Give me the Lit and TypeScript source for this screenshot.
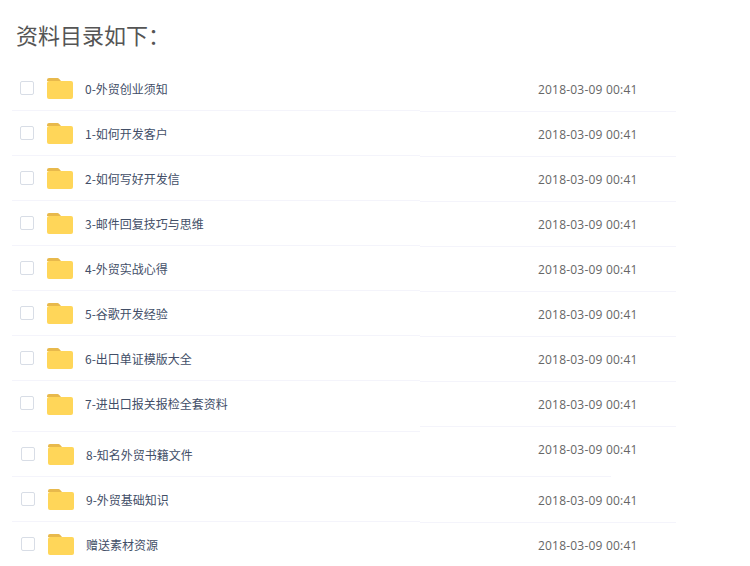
import { LitElement, html, css, svg } from "lit";
import { customElement } from "lit/decorators.js";

const names = ["0-外贸创业须知","1-如何开发客户","2-如何写好开发信","3-邮件回复技巧与思维","4-外贸实战心得","5-谷歌开发经验","6-出口单证模版大全","7-进出口报关报检全套资料","8-知名外贸书籍文件","9-外贸基础知识","赠送素材资源"];

const folder = svg`<svg class="folder" width="26" height="21" viewBox="0 0 26 21"><path d="M0 2a2 2 0 0 1 2-2h8.500a2 2 0 0 1 1.500.700L14 3H0z" fill="#e8b94c"/><path d="M0 5a2 2 0 0 1 2-2h22a2 2 0 0 1 2 2v14a2 2 0 0 1-2 2H2a2 2 0 0 1-2-2z" fill="#ffd659"/></svg>`;

@customElement("app-root")
export class AppRoot extends LitElement {
  static styles = css`
    :host { display: block; width: 750px; height: 566px; overflow: hidden; background: #fff; font-family: "Noto Sans CJK SC", sans-serif; }
    h1 { margin: 0; padding: 18px 0 0 16px; height: 66px; box-sizing: border-box; font-size: 22px; line-height: 32px; font-weight: 400; color: #555; }
    .table { display: grid; grid-template-columns: 408px 256px; margin-left: 12px; }
    .row { display: flex; align-items: center; height: 45px; box-sizing: border-box; border-bottom: 1px solid #f4f4fb; white-space: nowrap; }
    .name { padding-left: 8px; gap: 13px; padding-top: 1px; }
    .name.r7 { height: 51px; padding-bottom: 5px; }
    .name.shift { padding-left: 9px; }
    .box { width: 14px; height: 14px; box-sizing: border-box; border: 1px solid #d8dde6; border-radius: 2px; margin-bottom: 2px; background: #fff; }
    .folder { flex: none; }
    .label { font-size: 12px; line-height: 18px; color: #424e67; margin-left: -1px; }
    .dates { padding-top: 1px; }
    .date { padding-left: 118px; padding-top: 1px; font-family: "Open Sans", sans-serif; font-size: 12px; letter-spacing: 0.2px; color: #666; line-height: 18px; }
    .date.r8 { height: 50px; padding-top: 0; padding-bottom: 3px; }
    .date.r9 { height: 46px; padding-top: 2px; }
    .date.short { width: 191px; }
  `;
  render() {
    return html`
      <h1>资料目录如下：</h1>
      <div class="table">
        <div>
          ${names.map((n, i) => html`<div class="row name ${i === 7 ? "r7" : ""} ${i > 7 ? "shift" : ""}"><span class="box"></span>${folder}<span class="label">${n}</span></div>`)}
        </div>
        <div class="dates">
          ${names.map((_, i) => html`<div class="row date ${i === 8 ? "r8 short" : ""} ${i === 9 ? "r9" : ""}">2018-03-09 00:41</div>`)}
        </div>
      </div>`;
  }
}
